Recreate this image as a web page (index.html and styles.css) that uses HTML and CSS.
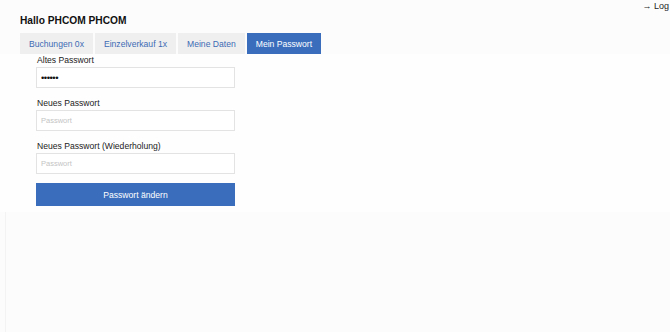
FILE: index.html
```html
<!DOCTYPE html>
<html lang="de">
<head>
<meta charset="utf-8">
<title>Mein Passwort</title>
<link rel="stylesheet" href="styles.css">
</head>
<body>
<div class="page">
  <div class="topbar"><a class="logout" href="#">→ Log</a></div>
  <h1 class="title">Hallo PHCOM PHCOM</h1>
  <nav class="tabs">
    <a class="tab" href="#">Buchungen 0x</a>
    <a class="tab" href="#">Einzelverkauf 1x</a>
    <a class="tab" href="#">Meine Daten</a>
    <a class="tab active" href="#">Mein Passwort</a>
  </nav>
  <div class="panel">
    <form class="form">
      <div class="group">
        <label class="label">Altes Passwort</label>
        <input class="input filled" type="password" value="secret">
      </div>
      <div class="group">
        <label class="label">Neues Passwort</label>
        <input class="input" type="password" placeholder="Passwort">
      </div>
      <div class="group">
        <label class="label">Neues Passwort (Wiederholung)</label>
        <input class="input" type="password" placeholder="Passwort">
      </div>
      <button class="submit" type="button">Passwort ändern</button>
    </form>
  </div>
  <div class="rest"></div>
</div>
</body>
</html>
```
FILE: styles.css
```css
html, body {
  margin: 0;
  padding: 0;
  height: 100%;
  overflow: hidden;
}
body {
  background: #fcfcfc;
  font-family: "Liberation Sans", Arial, sans-serif;
  color: #1e1e1e;
}
.page {
  display: flex;
  flex-direction: column;
  height: 100%;
}
.topbar {
  display: flex;
  justify-content: flex-end;
  height: 13px;
  padding-right: 1px;
  font-size: 9px;
  line-height: 13px;
}
.logout,
.logout:visited {
  color: #1e1e1e;
  text-decoration: none;
}
.title {
  margin: 0 0 0 20px;
  font-size: 10.2px;
  font-weight: 700;
  line-height: 15px;
  height: 20px;
  color: #111;
}
.tabs {
  display: flex;
  gap: 2px;
  margin-left: 20px;
  height: 21px;
}
.tab {
  display: flex;
  align-items: center;
  padding: 0 9px;
  background: #efefef;
  color: #3d6bb4;
  font-size: 8.6px;
  text-decoration: none;
}
.tab.active {
  background: #3a6ebd;
  color: #ffffff;
}
.panel {
  background: #fefefe;
  height: 158px;
  padding-left: 36px;
}
.form {
  display: flex;
  flex-direction: column;
  width: 199px;
}
.group {
  display: flex;
  flex-direction: column;
  margin-bottom: 9px;
}
.label {
  font-size: 8.6px;
  line-height: 12px;
  padding-left: 1px;
  margin-bottom: 1px;
  color: #222;
}
.input {
  box-sizing: border-box;
  height: 21px;
  width: 199px;
  margin: 0;
  border: 1px solid #e3e3e3;
  background: #fff;
  padding: 0 4px;
  font-family: "Liberation Sans", Arial, sans-serif;
  font-size: 7.5px;
  color: #222;
  outline: none;
}
.input.filled {
  font-size: 9.5px;
  letter-spacing: -0.5px;
  color: #111;
}
.input::placeholder {
  color: #c4c4c4;
}
.submit {
  height: 23px;
  width: 199px;
  border: 0;
  margin: 0;
  background: #3a6ebd;
  color: #fff;
  font-family: "Liberation Sans", Arial, sans-serif;
  font-size: 8.6px;
}
.rest {
  flex: 1;
  margin-left: 5px;
  border-left: 1px solid #f3f3f3;
}
```
